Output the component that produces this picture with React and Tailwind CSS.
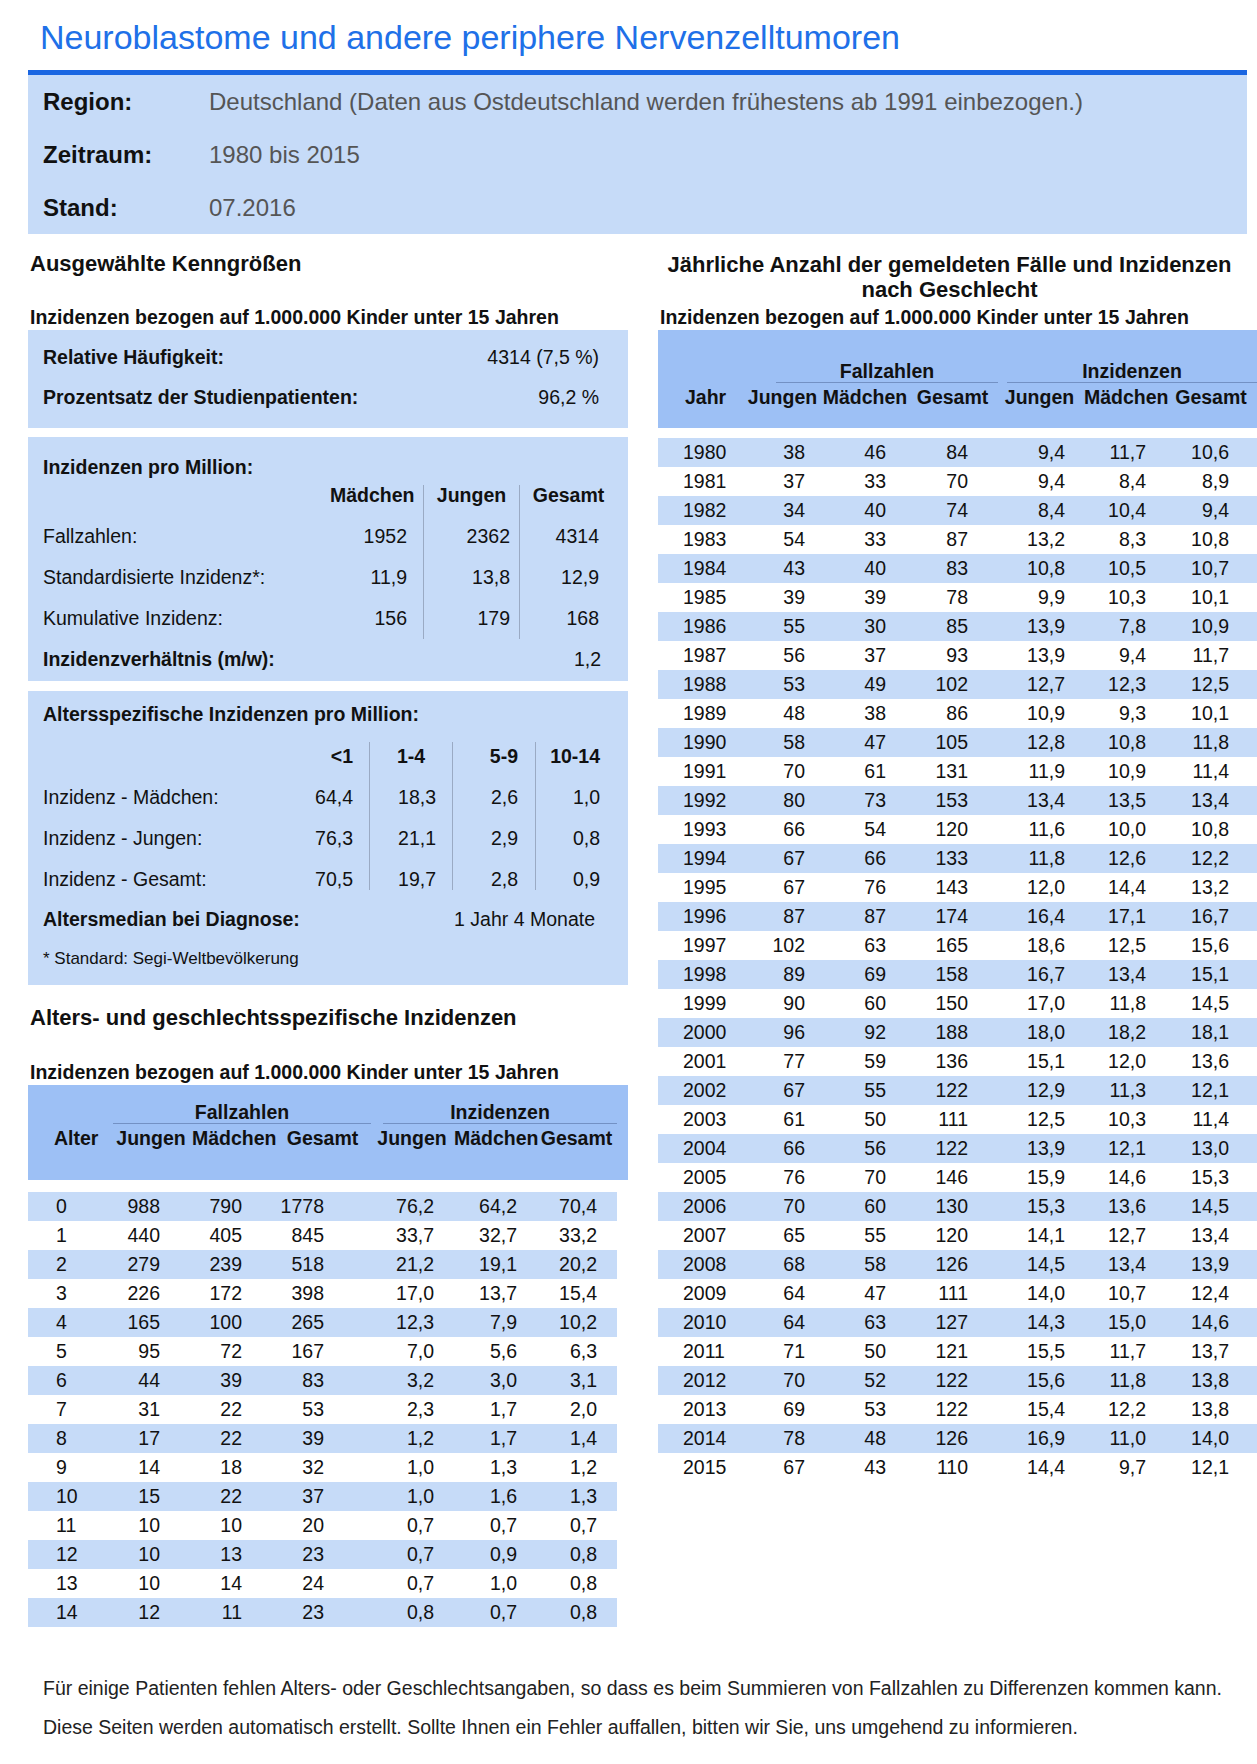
import React from "react";

const yearly = [
  ["1980","38","46","84","9,4","11,7","10,6"],
  ["1981","37","33","70","9,4","8,4","8,9"],
  ["1982","34","40","74","8,4","10,4","9,4"],
  ["1983","54","33","87","13,2","8,3","10,8"],
  ["1984","43","40","83","10,8","10,5","10,7"],
  ["1985","39","39","78","9,9","10,3","10,1"],
  ["1986","55","30","85","13,9","7,8","10,9"],
  ["1987","56","37","93","13,9","9,4","11,7"],
  ["1988","53","49","102","12,7","12,3","12,5"],
  ["1989","48","38","86","10,9","9,3","10,1"],
  ["1990","58","47","105","12,8","10,8","11,8"],
  ["1991","70","61","131","11,9","10,9","11,4"],
  ["1992","80","73","153","13,4","13,5","13,4"],
  ["1993","66","54","120","11,6","10,0","10,8"],
  ["1994","67","66","133","11,8","12,6","12,2"],
  ["1995","67","76","143","12,0","14,4","13,2"],
  ["1996","87","87","174","16,4","17,1","16,7"],
  ["1997","102","63","165","18,6","12,5","15,6"],
  ["1998","89","69","158","16,7","13,4","15,1"],
  ["1999","90","60","150","17,0","11,8","14,5"],
  ["2000","96","92","188","18,0","18,2","18,1"],
  ["2001","77","59","136","15,1","12,0","13,6"],
  ["2002","67","55","122","12,9","11,3","12,1"],
  ["2003","61","50","111","12,5","10,3","11,4"],
  ["2004","66","56","122","13,9","12,1","13,0"],
  ["2005","76","70","146","15,9","14,6","15,3"],
  ["2006","70","60","130","15,3","13,6","14,5"],
  ["2007","65","55","120","14,1","12,7","13,4"],
  ["2008","68","58","126","14,5","13,4","13,9"],
  ["2009","64","47","111","14,0","10,7","12,4"],
  ["2010","64","63","127","14,3","15,0","14,6"],
  ["2011","71","50","121","15,5","11,7","13,7"],
  ["2012","70","52","122","15,6","11,8","13,8"],
  ["2013","69","53","122","15,4","12,2","13,8"],
  ["2014","78","48","126","16,9","11,0","14,0"],
  ["2015","67","43","110","14,4","9,7","12,1"],
];

const ages = [
  ["0","988","790","1778","76,2","64,2","70,4"],
  ["1","440","405","845","33,7","32,7","33,2"],
  ["2","279","239","518","21,2","19,1","20,2"],
  ["3","226","172","398","17,0","13,7","15,4"],
  ["4","165","100","265","12,3","7,9","10,2"],
  ["5","95","72","167","7,0","5,6","6,3"],
  ["6","44","39","83","3,2","3,0","3,1"],
  ["7","31","22","53","2,3","1,7","2,0"],
  ["8","17","22","39","1,2","1,7","1,4"],
  ["9","14","18","32","1,0","1,3","1,2"],
  ["10","15","22","37","1,0","1,6","1,3"],
  ["11","10","10","20","0,7","0,7","0,7"],
  ["12","10","13","23","0,7","0,9","0,8"],
  ["13","10","14","24","0,7","1,0","0,8"],
  ["14","12","11","23","0,8","0,7","0,8"],
];

const rightCell = [
  "pl-[25px] text-left",
  "pr-[15px] text-right",
  "pr-[24px] text-right",
  "pr-[27px] text-right",
  "pr-[19px] text-right",
  "pr-[19px] text-right",
  "pr-[28px] text-right",
];

const leftCell = [
  "pl-[28px] text-left",
  "pr-[32px] text-right",
  "pr-[33px] text-right",
  "pr-[46px] text-right",
  "pr-[20px] text-right",
  "pr-[17px] text-right",
  "pr-[20px] text-right",
];

function InfoRow({ label, value }) {
  return (
    <div className="flex h-[53px] items-center">
      <div className="w-[181px] shrink-0 pl-[15px] text-[24px] font-bold text-[#111]">{label}</div>
      <div className="text-[24px] text-[#555]">{value}</div>
    </div>
  );
}

export default function App() {
  return (
    <div className="w-[1257px] min-h-[1764px] bg-white font-['Liberation_Sans',Arial,sans-serif] text-[#111]">
      <div className="pl-[40px] pt-[18px] text-[34px] leading-[38px] text-[#2070e8]">
        Neuroblastome und andere periphere Nervenzelltumoren
      </div>

      <div className="ml-[28px] mt-[14px] w-[1219px] border-t-[5px] border-[#1a66e2] bg-[#c6dbf8]">
        <InfoRow label="Region:" value="Deutschland (Daten aus Ostdeutschland werden frühestens ab 1991 einbezogen.)" />
        <InfoRow label="Zeitraum:" value="1980 bis 2015" />
        <InfoRow label="Stand:" value="07.2016" />
      </div>

      <div className="flex gap-[30px] pl-[28px]">
        {/* LEFT COLUMN */}
        <div className="w-[600px]">
          <div className="mt-[17px] pl-[2px] text-[22px] font-bold leading-[26px]">Ausgewählte Kenngrößen</div>
          <div className="mt-[28px] pl-[2px] text-[19.5px] font-bold leading-[24px]">
            Inzidenzen bezogen auf 1.000.000 Kinder unter 15 Jahren
          </div>

          <div className="mt-px bg-[#c6dbf8] pb-[10px] pl-[15px] pr-[29px] pt-[8px] text-[19.5px]">
            <div className="flex h-[40px] items-center justify-between">
              <span className="font-bold">Relative Häufigkeit:</span>
              <span>4314 (7,5 %)</span>
            </div>
            <div className="flex h-[40px] items-center justify-between">
              <span className="font-bold">Prozentsatz der Studienpatienten:</span>
              <span>96,2 %</span>
            </div>
          </div>

          <div className="mt-[9px] bg-[#c6dbf8] pb-px pl-[15px] pt-[14px] text-[19.5px]">
            <div className="flex h-[34px] items-center font-bold">Inzidenzen pro Million:</div>
            <div className="grid grid-cols-[287px_93px_96px_98px]">
              <div className="h-[31px]"></div>
              <div className="h-[31px] pr-[16px] text-right font-bold leading-[21px]">Mädchen</div>
              <div className="h-[31px] border-l border-[#9aaac4] text-center font-bold leading-[21px]">Jungen</div>
              <div className="h-[31px] border-l border-[#9aaac4] text-center font-bold leading-[21px]">Gesamt</div>

              <div className="flex h-[41px] items-center">Fallzahlen:</div>
              <div className="flex h-[41px] items-center justify-end pr-[16px]">1952</div>
              <div className="flex h-[41px] items-center justify-end border-l border-[#9aaac4] pr-[9px]">2362</div>
              <div className="flex h-[41px] items-center justify-end border-l border-[#9aaac4] pr-[18px]">4314</div>

              <div className="flex h-[41px] items-center">Standardisierte Inzidenz*:</div>
              <div className="flex h-[41px] items-center justify-end pr-[16px]">11,9</div>
              <div className="flex h-[41px] items-center justify-end border-l border-[#9aaac4] pr-[9px]">13,8</div>
              <div className="flex h-[41px] items-center justify-end border-l border-[#9aaac4] pr-[18px]">12,9</div>

              <div className="flex h-[41px] items-center">Kumulative Inzidenz:</div>
              <div className="flex h-[41px] items-center justify-end pr-[16px]">156</div>
              <div className="flex h-[41px] items-center justify-end border-l border-[#9aaac4] pr-[9px]">179</div>
              <div className="flex h-[41px] items-center justify-end border-l border-[#9aaac4] pr-[18px]">168</div>

              <div className="col-span-3 flex h-[41px] items-center font-bold">Inzidenzverhältnis (m/w):</div>
              <div className="flex h-[41px] items-center justify-end pr-[16px]">1,2</div>
            </div>
          </div>

          <div className="mt-[10px] bg-[#c6dbf8] pb-[7px] pl-[15px] pt-[10px] text-[19.5px]">
            <div className="flex h-[28px] items-center font-bold">Altersspezifische Inzidenzen pro Million:</div>
            <div className="mt-[13px] grid grid-cols-[247px_79px_83px_83px_82px]">
              <div className="h-[35px]"></div>
              <div className="h-[35px] pr-[16px] pt-[4px] text-right font-bold leading-[21px]">&lt;1</div>
              <div className="h-[35px] border-l border-[#9aaac4] pt-[4px] text-center font-bold leading-[21px]">1-4</div>
              <div className="h-[35px] border-l border-[#9aaac4] pr-[17px] pt-[4px] text-right font-bold leading-[21px]">5-9</div>
              <div className="h-[35px] border-l border-[#9aaac4] pr-[17px] pt-[4px] text-right font-bold leading-[21px]">10-14</div>

              <div className="flex h-[41px] items-center">Inzidenz - Mädchen:</div>
              <div className="flex h-[41px] items-center justify-end pr-[16px]">64,4</div>
              <div className="flex h-[41px] items-center justify-end border-l border-[#9aaac4] pr-[16px]">18,3</div>
              <div className="flex h-[41px] items-center justify-end border-l border-[#9aaac4] pr-[17px]">2,6</div>
              <div className="flex h-[41px] items-center justify-end border-l border-[#9aaac4] pr-[17px]">1,0</div>

              <div className="flex h-[41px] items-center">Inzidenz - Jungen:</div>
              <div className="flex h-[41px] items-center justify-end pr-[16px]">76,3</div>
              <div className="flex h-[41px] items-center justify-end border-l border-[#9aaac4] pr-[16px]">21,1</div>
              <div className="flex h-[41px] items-center justify-end border-l border-[#9aaac4] pr-[17px]">2,9</div>
              <div className="flex h-[41px] items-center justify-end border-l border-[#9aaac4] pr-[17px]">0,8</div>

              <div className="h-[31px] pt-[10px] leading-[21px]">Inzidenz - Gesamt:</div>
              <div className="h-[31px] pr-[16px] pt-[10px] text-right leading-[21px]">70,5</div>
              <div className="h-[31px] border-l border-[#9aaac4] pr-[16px] pt-[10px] text-right leading-[21px]">19,7</div>
              <div className="h-[31px] border-l border-[#9aaac4] pr-[17px] pt-[10px] text-right leading-[21px]">2,8</div>
              <div className="h-[31px] border-l border-[#9aaac4] pr-[17px] pt-[10px] text-right leading-[21px]">0,9</div>
            </div>
            <div className="mt-[10px] flex h-[40px] items-center justify-between pr-[33px]">
              <span className="whitespace-nowrap font-bold">Altersmedian bei Diagnose:</span>
              <span>1 Jahr 4 Monate</span>
            </div>
            <div className="flex h-[38px] items-center text-[17px]">* Standard: Segi-Weltbevölkerung</div>
          </div>

          <div className="mt-[20px] pl-[2px] text-[22px] font-bold leading-[26px]">
            Alters- und geschlechtsspezifische Inzidenzen
          </div>
          <div className="mt-[29px] pl-[2px] text-[19.5px] font-bold leading-[24px]">
            Inzidenzen bezogen auf 1.000.000 Kinder unter 15 Jahren
          </div>

          <div className="mt-px h-[95px] bg-[#9dc0f5] pt-[16px] text-[19.5px] font-bold">
            <div className="flex">
              <div className="ml-[85px] w-[258px] border-b border-[#7391c4] text-center leading-[22px]">Fallzahlen</div>
              <div className="ml-[12px] w-[234px] border-b border-[#7391c4] text-center leading-[22px]">Inzidenzen</div>
            </div>
            <div className="mt-[3px] grid grid-cols-[82px_82px_83px_95px_84px_80px_85px] leading-[22px]">
              <div className="pl-[26px]">Alter</div>
              <div className="text-center">Jungen</div>
              <div className="text-center">Mädchen</div>
              <div className="text-center">Gesamt</div>
              <div className="text-center">Jungen</div>
              <div className="text-center">Mädchen</div>
              <div className="text-center">Gesamt</div>
            </div>
          </div>

          <div className="mt-[12px] w-[589px] text-[19.5px]">
            {ages.map((r, i) => (
              <div
                key={r[0]}
                className={
                  "grid h-[29px] grid-cols-[82px_82px_83px_95px_84px_80px_83px] items-center leading-[29px] " +
                  (i % 2 === 0 ? "bg-[#c6dbf8]" : "bg-white")
                }
              >
                {r.map((v, j) => (
                  <div key={j} className={leftCell[j]}>{v}</div>
                ))}
              </div>
            ))}
          </div>
        </div>

        {/* RIGHT COLUMN */}
        <div className="w-[599px]">
          <div className="mt-[18px] pr-[16px] text-center text-[22px] font-bold leading-[25px]">
            Jährliche Anzahl der gemeldeten Fälle und Inzidenzen
            <br />
            nach Geschlecht
          </div>
          <div className="mt-[3px] pl-[2px] text-[19.5px] font-bold leading-[24px]">
            Inzidenzen bezogen auf 1.000.000 Kinder unter 15 Jahren
          </div>

          <div className="mt-px h-[98px] bg-[#9dc0f5] pt-[30px] text-[19.5px] font-bold">
            <div className="flex">
              <div className="ml-[118px] w-[222px] border-b border-[#7391c4] text-center leading-[22px]">Fallzahlen</div>
              <div className="ml-[9px] w-[250px] border-b border-[#7391c4] text-center leading-[22px]">Inzidenzen</div>
            </div>
            <div className="mt-[3px] grid grid-cols-[87px_75px_90px_85px_89px_81px_92px] leading-[22px]">
              <div className="pl-[27px]">Jahr</div>
              <div className="text-center">Jungen</div>
              <div className="text-center">Mädchen</div>
              <div className="text-center">Gesamt</div>
              <div className="text-center">Jungen</div>
              <div className="text-center">Mädchen</div>
              <div className="text-center">Gesamt</div>
            </div>
          </div>

          <div className="mt-[10px] text-[19.5px]">
            {yearly.map((r, i) => (
              <div
                key={r[0]}
                className={
                  "grid h-[29px] grid-cols-[87px_75px_90px_85px_89px_81px_92px] items-center leading-[29px] " +
                  (i % 2 === 0 ? "bg-[#c6dbf8]" : "bg-white")
                }
              >
                {r.map((v, j) => (
                  <div key={j} className={rightCell[j]}>{v}</div>
                ))}
              </div>
            ))}
          </div>
        </div>
      </div>

      <div className="mt-[49px] pl-[43px] text-[19.5px] leading-[24px] text-[#222]">
        Für einige Patienten fehlen Alters- oder Geschlechtsangaben, so dass es beim Summieren von Fallzahlen zu Differenzen kommen kann.
      </div>
      <div className="mt-[15px] pb-[25px] pl-[43px] text-[19.5px] leading-[24px] text-[#222]">
        Diese Seiten werden automatisch erstellt. Sollte Ihnen ein Fehler auffallen, bitten wir Sie, uns umgehend zu informieren.
      </div>
    </div>
  );
}
